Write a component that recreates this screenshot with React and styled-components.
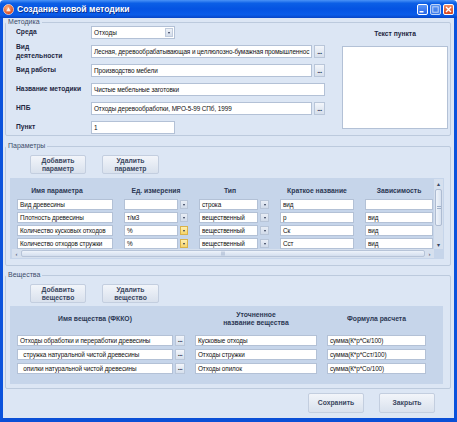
import React from 'react';
import styled, { createGlobalStyle } from 'styled-components';

const FONT = '"Liberation Sans", Arial, sans-serif';

const Global = createGlobalStyle`
  html, body { margin: 0; padding: 0; background: #fff; }
  body { font-family: ${FONT}; }
  * { box-sizing: border-box; }
`;

const Window = styled.div`
  width: 457px;
  height: 422px;
  display: flex;
  flex-direction: column;
  overflow: hidden;
`;

const TitleBar = styled.div`
  height: 18px;
  flex: none;
  display: flex;
  align-items: center;
  gap: 3px;
  padding: 0 2px 0 3px;
  background: linear-gradient(to bottom, #4a93f7 0%, #0b5fe6 18%, #0453e2 50%, #0a5ce9 82%, #0745c6 100%);
  border-radius: 4px 4px 0 0;
`;

const Title = styled.span`
  flex: 1;
  color: #fff;
  font: bold 8.6px/10px ${FONT};
  text-shadow: 1px 1px 0 #0b2f8c;
  white-space: nowrap;
`;

const CaptionButtons = styled.div`
  display: flex;
  gap: 2px;
  padding-right: 1px;
`;

const CaptionButton = styled.div`
  width: 11px;
  height: 11px;
  border: 1px solid #fff;
  border-radius: 2px;
  background: ${p => (p.$close ? 'linear-gradient(#f08b62, #d8441e)' : p.$dim ? 'linear-gradient(#6fa3f7, #4d86ee)' : 'linear-gradient(#5a96f8, #2463e8)')};
  display: flex;
  align-items: center;
  justify-content: center;
  opacity: ${p => (p.$dim ? 0.75 : 1)};
`;

const Frame = styled.div`
  flex: 1;
  min-height: 0;
  display: flex;
  border-left: 3px solid #0a52dc;
  border-right: 3px solid #0a52dc;
  border-bottom: 4px solid #0a4fd6;
`;

const Body = styled.div`
  flex: 1;
  background: #dce6f4;
  display: flex;
  flex-direction: column;
  padding: 0 3px 0 2px;
`;

const Group = styled.fieldset`
  margin: ${p => p.$mt || 0}px 0 0 0;
  padding: 0;
  min-width: 0;
  border: 1px solid #bccadd;
  border-radius: 2px;
`;

const Legend = styled.legend`
  padding: 0 2px;
  margin-left: 0;
  font: 7px/8px ${FONT};
  color: #3d4d6b;
`;

const MetodContent = styled.div`
  display: flex;
  justify-content: space-between;
  padding: 0 2px 1px 10px;
`;

const FormGrid = styled.div`
  display: grid;
  grid-template-columns: 75px auto;
  grid-auto-rows: 13px;
  row-gap: 6px;
  align-items: center;
`;

const Label = styled.div`
  font: bold 6.7px/8.5px ${FONT};
  color: #1c2742;
  white-space: pre-line;
`;

const ControlRow = styled.div`
  display: flex;
  gap: 2px;
  height: 13px;
`;

const TextBox = styled.div`
  width: ${p => p.$w}px;
  height: ${p => p.$h || 13}px;
  background: #fff;
  border: 1px solid #b3c1d6;
  padding: 0 1px 0 2px;
  font: 6.4px/${p => (p.$h || 13) - 2}px ${FONT};
  letter-spacing: -0.1px;
  color: #111;
  white-space: pre;
  overflow: hidden;
  flex: ${p => (p.$w ? 'none' : '1')};
  min-width: 0;
`;

const Combo = styled.div`
  width: ${p => p.$w}px;
  height: 13px;
  background: #fff;
  border: 1px solid #b3c1d6;
  display: flex;
  align-items: center;
  justify-content: space-between;
  padding: 0 1px 0 2px;
  font: 6.4px/11px ${FONT};
  color: #111;
`;

const ComboButton = styled.div`
  width: 8px;
  height: 9px;
  background: linear-gradient(#eef2f8, #d3dcea);
  border: 1px solid #c0cbdc;
  display: flex;
  align-items: center;
  justify-content: center;
`;

const Arrow = styled.span`
  width: 0;
  height: 0;
  border-left: 1.5px solid transparent;
  border-right: 1.5px solid transparent;
  border-top: 2px solid #2b3550;
`;

const EllipsisButton = styled.div`
  width: ${p => p.$w || 11}px;
  height: ${p => p.$h || 13}px;
  flex: none;
  background: linear-gradient(#f3f6fb, #d6dfec);
  border: 1px solid #b9c6d9;
  font: bold 7px/7px ${FONT};
  color: #2b3550;
  display: flex;
  align-items: flex-end;
  justify-content: center;
  padding-bottom: 2px;
  letter-spacing: -0.5px;
`;

const TextPane = styled.div`
  width: 106px;
  display: flex;
  flex-direction: column;
  align-items: center;
  padding-top: 4px;
  gap: 7px;
`;

const TextArea = styled.div`
  width: 106px;
  height: 83px;
  background: #fff;
  border: 1px solid #b3c1d6;
`;

const ButtonRow = styled.div`
  display: flex;
  gap: 16px;
  padding: 5px 0 0 24px;
`;

const ActionButton = styled.div`
  width: ${p => p.$w || 56}px;
  height: ${p => p.$h || 19}px;
  background: linear-gradient(#f2f5fa, #d9e1ed);
  border: 1px solid #c3cedf;
  border-radius: 2px;
  display: flex;
  align-items: center;
  justify-content: center;
  text-align: center;
  font: bold 6.8px/8px ${FONT};
  color: #3a4660;
  white-space: pre-line;
`;

const ParamsPanel = styled.div`
  margin: 4px 6px 6px 4px;
  background: #c6d5ea;
  display: grid;
  grid-template-columns: 1fr 9px;
  grid-template-rows: auto 9px;
  padding: 1px 1px 1px 2px;
`;

const ParamTable = styled.div`
  display: grid;
  grid-template-columns: 96px 64px 70px 74px 68px;
  grid-template-rows: 18px repeat(4, 11px);
  column-gap: 11px;
  row-gap: 2px;
  padding-left: 5px;
  overflow: hidden;
`;

const HeadCell = styled.div`
  font: bold 6.8px/8px ${FONT};
  color: #2c3854;
  text-align: center;
  align-self: ${p => p.$align || 'end'};
  padding-bottom: ${p => (p.$align ? 0 : 2)}px;
  padding-right: ${p => p.$shift || 0}px;
  white-space: pre-line;
`;

const CellRow = styled.div`
  display: flex;
  align-items: center;
  gap: 2px;
  min-width: 0;
`;

const DropButton = styled.div`
  width: ${p => p.$w || 8}px;
  height: 9px;
  flex: none;
  background: ${p => (p.$hot ? 'linear-gradient(#fff0b0, #f6d46a)' : 'linear-gradient(#e9eef6, #d0dae9)')};
  border: 1px solid ${p => (p.$hot ? '#d9b24a' : '#b8c5d8')};
  display: flex;
  align-items: center;
  justify-content: center;
`;

const VScroll = styled.div`
  display: flex;
  flex-direction: column;
  background: #d6e0ee;
  gap: 1px;
`;

const ScrollArrow = styled.div`
  width: 9px;
  height: 9px;
  flex: none;
  display: flex;
  align-items: center;
  justify-content: center;
  color: #3a4660;
  font: 6px/6px ${FONT};
`;

const VThumb = styled.div`
  height: 37px;
  margin: 0 1px;
  background: linear-gradient(to right, #eef3fa, #d8e2f0);
  border: 1px solid #aebcd2;
  border-radius: 2px;
  display: flex;
  align-items: center;
  justify-content: center;
`;

const Spacer = styled.div`
  flex: 1;
`;

const HScroll = styled.div`
  display: flex;
  align-items: center;
  background: #d6e0ee;
`;

const HThumb = styled.div`
  flex: 1;
  height: 7px;
  background: linear-gradient(#eef3fa, #d3deee);
  border: 1px solid #b7c4d8;
  border-radius: 2px;
  display: flex;
  align-items: center;
  justify-content: center;
`;

const Grip = styled.div`
  width: 4px;
  height: 3px;
  border-top: 1px solid #9fb0c9;
  border-bottom: 1px solid #9fb0c9;
  transform: ${p => (p.$v ? 'none' : 'rotate(90deg)')};
`;

const Corner = styled.div`
  background: #c6d5ea;
`;

const SubPanel = styled.div`
  margin: 3px 7px 4px 4px;
  background: #c6d5ea;
  padding: 0 0 10px 7px;
`;

const SubTable = styled.div`
  display: grid;
  grid-template-columns: 168px 122px 99px;
  grid-template-rows: 26px repeat(3, 11px);
  column-gap: 10px;
  row-gap: 3px;
`;

const Footer = styled.div`
  display: flex;
  justify-content: flex-end;
  gap: 15px;
  padding: 4px 16px 0 0;
`;

const AppIcon = () => (
  <svg width="11" height="11" viewBox="0 0 11 11">
    <defs>
      <radialGradient id="ic" cx="40%" cy="35%" r="70%">
        <stop offset="0" stopColor="#ffb27a" />
        <stop offset="1" stopColor="#d23a14" />
      </radialGradient>
    </defs>
    <circle cx="5.5" cy="5.5" r="5" fill="url(#ic)" stroke="#f6e1d6" strokeWidth="0.8" />
    <path d="M3.2 7.2 L5.5 3.2 L7.8 7.2 Z" fill="#fff" opacity="0.85" />
  </svg>
);

const params = [
  { name: 'Вид древесины', unit: '', type: 'строка', short: 'вид', dep: '', hot: false },
  { name: 'Плотность древесины', unit: 'т/м3', type: 'вещественный', short: 'р', dep: 'вид', hot: false },
  { name: 'Количество кусковых отходов', unit: '%', type: 'вещественный', short: 'Ск', dep: 'вид', hot: true },
  { name: 'Количество отходов стружки', unit: '%', type: 'вещественный', short: 'Сст', dep: 'вид', hot: true },
];

const substances = [
  { name: 'Отходы обработки и переработки древесины', spec: 'Кусковые отходы', formula: 'сумма(К*р*Ск/100)' },
  { name: '  стружка натуральной чистой древесины', spec: 'Отходы стружки', formula: 'сумма(К*р*Сст/100)' },
  { name: '  опилки натуральной чистой древесины', spec: 'Отходы опилок', formula: 'сумма(К*р*Со/100)' },
];

export default function App() {
  return (
    <>
      <Global />
      <Window>
        <TitleBar>
          <AppIcon />
          <Title>Создание новой методики</Title>
          <CaptionButtons>
            <CaptionButton>
              <svg width="7" height="7" viewBox="0 0 7 7"><rect x="0.5" y="5" width="4" height="1.5" fill="#fff" /></svg>
            </CaptionButton>
            <CaptionButton $dim>
              <svg width="7" height="7" viewBox="0 0 7 7"><rect x="0.8" y="0.8" width="5.4" height="5.4" fill="none" stroke="#fff" strokeWidth="1" /></svg>
            </CaptionButton>
            <CaptionButton $close>
              <svg width="7" height="7" viewBox="0 0 7 7"><path d="M1 1 L6 6 M6 1 L1 6" stroke="#fff" strokeWidth="1.4" /></svg>
            </CaptionButton>
          </CaptionButtons>
        </TitleBar>
        <Frame>
          <Body>
            <Group>
              <Legend>Методика</Legend>
              <MetodContent>
                <FormGrid>
                  <Label>Среда</Label>
                  <Combo $w={84}>Отходы<ComboButton><Arrow /></ComboButton></Combo>
                  <Label>{'Вид\nдеятельности'}</Label>
                  <ControlRow>
                    <TextBox $w={221}>Лесная, деревообрабатывающая и целлюлозно-бумажная промышленнос</TextBox>
                    <EllipsisButton>...</EllipsisButton>
                  </ControlRow>
                  <Label>Вид работы</Label>
                  <ControlRow>
                    <TextBox $w={221}>Производство мебели</TextBox>
                    <EllipsisButton>...</EllipsisButton>
                  </ControlRow>
                  <Label>Название методики</Label>
                  <TextBox $w={234}>Чистые мебельные заготовки</TextBox>
                  <Label>НПБ</Label>
                  <ControlRow>
                    <TextBox $w={221}>Отходы деревообработки, МРО-5-99 СПб, 1999</TextBox>
                    <EllipsisButton>...</EllipsisButton>
                  </ControlRow>
                  <Label>Пункт</Label>
                  <TextBox $w={84}>1</TextBox>
                </FormGrid>
                <TextPane>
                  <Label>Текст пункта</Label>
                  <TextArea />
                </TextPane>
              </MetodContent>
            </Group>

            <Group $mt={6}>
              <Legend>Параметры</Legend>
              <ButtonRow>
                <ActionButton>{'Добавить\nпараметр'}</ActionButton>
                <ActionButton $w={57}>{'Удалить\nпараметр'}</ActionButton>
              </ButtonRow>
              <ParamsPanel>
                <ParamTable>
                  <HeadCell $shift={16}>Имя параметра</HeadCell>
                  <HeadCell>Ед. измерения</HeadCell>
                  <HeadCell $shift={8}>Тип</HeadCell>
                  <HeadCell>Краткое название</HeadCell>
                  <HeadCell>Зависимость</HeadCell>
                  {params.map((p, i) => (
                    <React.Fragment key={i}>
                      <TextBox $h={11}>{p.name}</TextBox>
                      <CellRow>
                        <TextBox $h={11}>{p.unit}</TextBox>
                        <DropButton $hot={p.hot}><Arrow /></DropButton>
                      </CellRow>
                      <CellRow>
                        <TextBox $h={11}>{p.type}</TextBox>
                        <DropButton $w={9}><Arrow /></DropButton>
                      </CellRow>
                      <TextBox $h={11}>{p.short}</TextBox>
                      <TextBox $h={11}>{p.dep}</TextBox>
                    </React.Fragment>
                  ))}
                </ParamTable>
                <VScroll>
                  <ScrollArrow>▴</ScrollArrow>
                  <VThumb><Grip $v /></VThumb>
                  <Spacer />
                  <ScrollArrow>▾</ScrollArrow>
                </VScroll>
                <HScroll>
                  <ScrollArrow>‹</ScrollArrow>
                  <HThumb><Grip /></HThumb>
                  <ScrollArrow>›</ScrollArrow>
                </HScroll>
                <Corner />
              </ParamsPanel>
            </Group>

            <Group $mt={5}>
              <Legend>Вещества</Legend>
              <ButtonRow>
                <ActionButton>{'Добавить\nвещество'}</ActionButton>
                <ActionButton $w={57}>{'Удалить\nвещество'}</ActionButton>
              </ButtonRow>
              <SubPanel>
                <SubTable>
                  <HeadCell $align="center" $shift={12}>Имя вещества (ФККО)</HeadCell>
                  <HeadCell $align="center">{'Уточненное\nназвание вещества'}</HeadCell>
                  <HeadCell $align="center">Формула расчета</HeadCell>
                  {substances.map((s, i) => (
                    <React.Fragment key={i}>
                      <CellRow>
                        <TextBox $h={11}>{s.name}</TextBox>
                        <EllipsisButton $h={11} $w={10}>...</EllipsisButton>
                      </CellRow>
                      <TextBox $h={11}>{s.spec}</TextBox>
                      <TextBox $h={11}>{s.formula}</TextBox>
                    </React.Fragment>
                  ))}
                </SubTable>
              </SubPanel>
            </Group>

            <Footer>
              <ActionButton $h={20}>Сохранить</ActionButton>
              <ActionButton $h={20}>Закрыть</ActionButton>
            </Footer>
          </Body>
        </Frame>
      </Window>
    </>
  );
}
